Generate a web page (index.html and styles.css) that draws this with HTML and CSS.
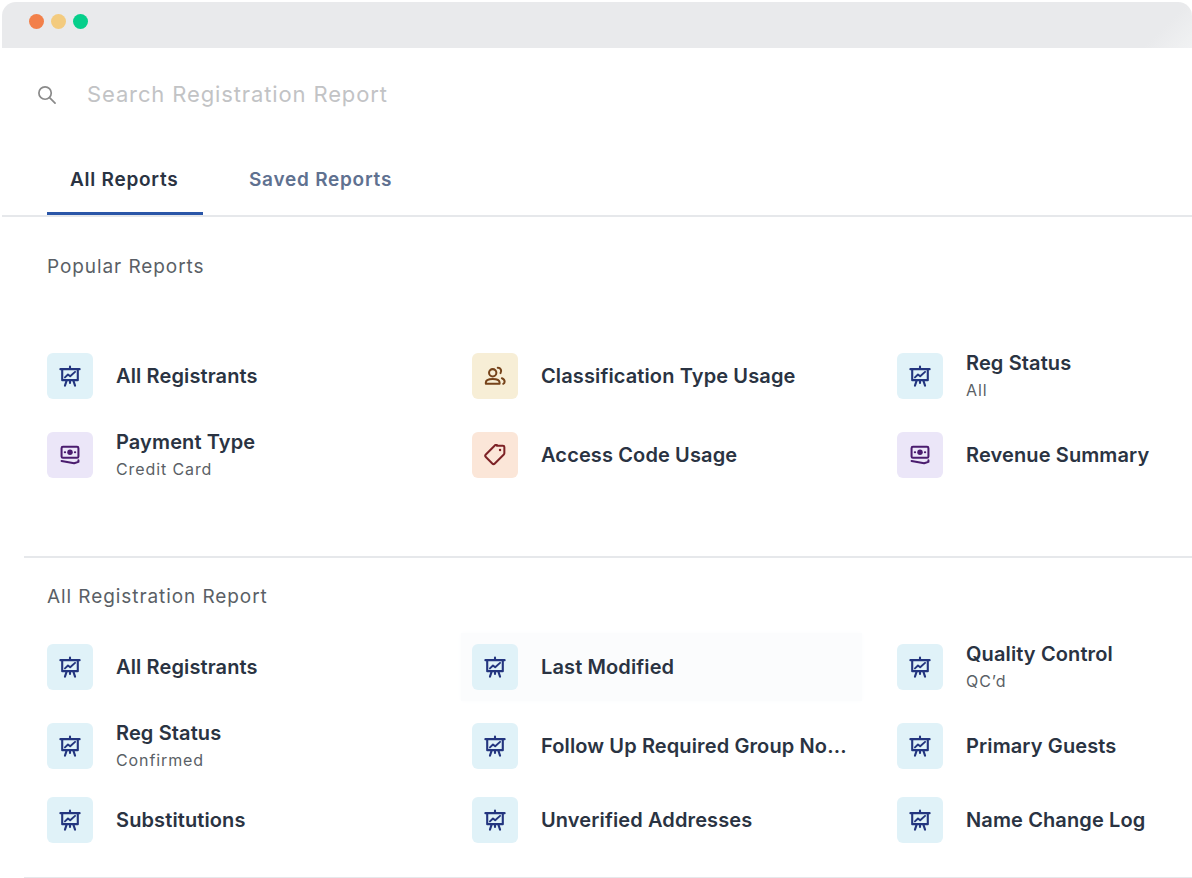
FILE: index.html
```html
<!DOCTYPE html>
<html lang="en">

<head>
    <meta charset="UTF-8">
    <meta name="viewport" content="width=device-width, initial-scale=1.0">
    <title>Registration Reports</title>
    <link rel="stylesheet" href="styles.css">
</head>

<body>

    <svg class="sprites" width="0" height="0">
        <symbol id="i-chart" viewBox="0 0 24 24">
            <path d="M1.500 4.500h21M3.500 4.500v12h17v-12M12 4.500V1.800M8.500 16.500 6.500 22.500M15.500 16.500 17.500 22.500M12 16.500V19.500" fill="none" stroke="currentColor" stroke-width="2.300" stroke-linecap="round" stroke-linejoin="round"/>
            <path d="M6.500 13.500 9.800 10.300 12.200 12.300 17.500 7.500" fill="none" stroke="currentColor" stroke-width="2.100" stroke-linecap="round" stroke-linejoin="round"/>
        </symbol>
        <symbol id="i-money" viewBox="0 0 24 24">
            <rect x="2.800" y="3" width="18.400" height="12" rx="1.500" fill="none" stroke="currentColor" stroke-width="2.200"/>
            <circle cx="12" cy="9" r="3" fill="currentColor"/>
            <path d="M6.300 9h.4M17.300 9h.4" stroke="currentColor" stroke-width="2.200" stroke-linecap="round"/>
            <path d="M2.800 18.500 16.500 21l4.700-1.500v-1.800" fill="none" stroke="currentColor" stroke-width="2.200" stroke-linecap="round" stroke-linejoin="round"/>
        </symbol>
        <symbol id="i-users" viewBox="0 0 24 24">
            <circle cx="9.500" cy="8.500" r="4" fill="none" stroke="currentColor" stroke-width="2.200"/>
            <path d="M2 20.500v-1.300c0-2.500 2.200-3.900 7.500-3.900s7.500 1.400 7.500 3.900v1.300z" fill="none" stroke="currentColor" stroke-width="2.200" stroke-linejoin="round"/>
            <path d="M15 3a3.600 3.600 0 0 1 3 5.800M19.500 14.500c1.800.6 3 2 3 3.800 0 1-.5 1.700-1.500 2.200" fill="none" stroke="currentColor" stroke-width="2.200" stroke-linecap="round"/>
        </symbol>
        <symbol id="i-tag" viewBox="0 0 24 24">
            <path d="M14 1.800h6.700a1.500 1.500 0 0 1 1.500 1.500V10a2 2 0 0 1-.6 1.400l-9.800 9.800a2 2 0 0 1-2.800 0l-7-7a2 2 0 0 1 0-2.800l9.800-9.800a2 2 0 0 1 2.200-.6z" fill="none" stroke="currentColor" stroke-width="2.200" stroke-linejoin="round"/>
            <circle cx="17.500" cy="6.500" r="1.300" fill="currentColor"/>
        </symbol>
    </svg>

    <div class="window-bar">
        <span class="dot dot-orange"></span>
        <span class="dot dot-yellow"></span>
        <span class="dot dot-green"></span>
    </div>

    <div class="search">
        <svg class="search-icon" viewBox="0 0 20 20">
            <circle cx="8.500" cy="8.500" r="6.500" fill="none" stroke="currentColor" stroke-width="1.800"/>
            <path d="M13.500 13.500 19 19" fill="none" stroke="currentColor" stroke-width="1.800" stroke-linecap="round"/>
        </svg>
        <span class="search-text">Search Registration Report</span>
    </div>

    <div class="tabs">
        <a class="tab active">All Reports</a>
        <a class="tab">Saved Reports</a>
    </div>

    <section class="section popular">
        <h2 class="section-title">Popular Reports</h2>
        <div class="grid">
            <div class="item">
                <span class="icon blue"><svg><use href="#i-chart"/></svg></span>
                <div class="label"><div class="name">All Registrants</div></div>
            </div>
            <div class="item">
                <span class="icon yellow"><svg><use href="#i-users"/></svg></span>
                <div class="label"><div class="name">Classification Type Usage</div></div>
            </div>
            <div class="item">
                <span class="icon blue"><svg><use href="#i-chart"/></svg></span>
                <div class="label"><div class="name">Reg Status</div><div class="sub">All</div></div>
            </div>
            <div class="item">
                <span class="icon purple"><svg><use href="#i-money"/></svg></span>
                <div class="label"><div class="name">Payment Type</div><div class="sub">Credit Card</div></div>
            </div>
            <div class="item">
                <span class="icon orange"><svg><use href="#i-tag"/></svg></span>
                <div class="label"><div class="name">Access Code Usage</div></div>
            </div>
            <div class="item">
                <span class="icon purple"><svg><use href="#i-money"/></svg></span>
                <div class="label"><div class="name">Revenue Summary</div></div>
            </div>
        </div>
    </section>

    <section class="section all">
        <h2 class="section-title">All Registration Report</h2>
        <div class="grid">
            <div class="item">
                <span class="icon blue"><svg><use href="#i-chart"/></svg></span>
                <div class="label"><div class="name">All Registrants</div></div>
            </div>
            <div class="item hovered">
                <span class="icon blue"><svg><use href="#i-chart"/></svg></span>
                <div class="label"><div class="name">Last Modified</div></div>
            </div>
            <div class="item">
                <span class="icon blue"><svg><use href="#i-chart"/></svg></span>
                <div class="label"><div class="name">Quality Control</div><div class="sub">QC’d</div></div>
            </div>
            <div class="item">
                <span class="icon blue"><svg><use href="#i-chart"/></svg></span>
                <div class="label"><div class="name">Reg Status</div><div class="sub">Confirmed</div></div>
            </div>
            <div class="item">
                <span class="icon blue"><svg><use href="#i-chart"/></svg></span>
                <div class="label"><div class="name">Follow Up Required Group No...</div></div>
            </div>
            <div class="item">
                <span class="icon blue"><svg><use href="#i-chart"/></svg></span>
                <div class="label"><div class="name">Primary Guests</div></div>
            </div>
            <div class="item">
                <span class="icon blue"><svg><use href="#i-chart"/></svg></span>
                <div class="label"><div class="name">Substitutions</div></div>
            </div>
            <div class="item">
                <span class="icon blue"><svg><use href="#i-chart"/></svg></span>
                <div class="label"><div class="name">Unverified Addresses</div></div>
            </div>
            <div class="item">
                <span class="icon blue"><svg><use href="#i-chart"/></svg></span>
                <div class="label"><div class="name">Name Change Log</div></div>
            </div>
        </div>
    </section>

</body>

</html>
```

FILE: styles.css
```css
* {
    margin: 0;
    padding: 0;
    box-sizing: border-box;
    font-family: 'Inter', 'Open Sans', sans-serif;
}

html,
body {
    height: 878px;
    overflow: hidden;
}

body {
    background-color: #ffffff;
    padding-top: 2px;
}

.sprites {
    display: block;
    height: 0;
}

.window-bar {
    height: 46px;
    margin-left: 2px;
    padding: 0 0 8px 27px;
    display: flex;
    align-items: center;
    gap: 7px;
    background: linear-gradient(135deg, #e9eaec 96%, #f1f2f3 100%);
    border-top-left-radius: 14px;
    border-top-right-radius: 14px;
}

.dot {
    width: 15px;
    height: 15px;
    border-radius: 50%;
}

.dot-orange {
    background-color: #f2804a;
}

.dot-yellow {
    background-color: #f3cb7f;
}

.dot-green {
    background-color: #06cf8b;
}

.search {
    height: 92px;
    padding-left: 37px;
    display: flex;
    align-items: center;
}

.search-icon {
    width: 19px;
    height: 19px;
    color: #8a8a8a;
}

.search-text {
    margin-left: 31px;
    font-size: 22px;
    letter-spacing: 0.87px;
    color: #c2c3c5;
}

.tabs {
    height: 77px;
    margin-left: 2px;
    padding-left: 45px;
    display: flex;
    border-bottom: 2px solid #e6e8eb;
}

.tab {
    height: 75px;
    padding-top: 28px;
    font-size: 19px;
    font-weight: 600;
    line-height: 24px;
    letter-spacing: 0.75px;
    color: #5f7190;
}

.tab.active {
    width: 156px;
    padding-left: 23px;
    margin-right: 46px;
    color: #2a3342;
    border-bottom: 3px solid #2a56a8;
}

.section {
    padding-left: 47px;
}

.popular {
    height: 339px;
    padding-top: 38px;
}

.all {
    height: 323px;
    margin-left: 24px;
    padding-left: 23px;
    padding-top: 27px;
    border-top: 2px solid #e6e8eb;
    border-bottom: 2px solid #e6e8eb;
}

.section-title {
    font-size: 19px;
    font-weight: 400;
    line-height: 24px;
    letter-spacing: 0.92px;
    color: #5a5f66;
}

.grid {
    display: grid;
    grid-template-columns: 425px 425px 1fr;
    align-items: start;
}

.popular .grid {
    margin-top: 74px;
    grid-template-rows: 79px 46px;
}

.all .grid {
    margin-top: 35px;
    grid-template-rows: 79px 74px 46px;
}

.item {
    height: 46px;
    display: flex;
    align-items: center;
    gap: 23px;
}

.item.hovered {
    width: 401px;
    height: 68px;
    margin: -11px 0 0 -11px;
    padding: 11px;
    background-color: #fbfcfd;
    box-shadow: 0 0 6px #fbfcfd;
}

.icon {
    flex: none;
    width: 46px;
    height: 46px;
    border-radius: 6px;
    display: flex;
    align-items: center;
    justify-content: center;
}

.icon svg {
    width: 22px;
    height: 22px;
}

.blue {
    background-color: #e0f2f8;
    color: #23357f;
}

.yellow {
    background-color: #f7eed6;
    color: #76431a;
}

.purple {
    background-color: #ebe6f8;
    color: #4a1c6e;
}

.orange {
    background-color: #fbe6d8;
    color: #7d2226;
}

.name {
    font-size: 20px;
    font-weight: 600;
    line-height: 25px;
    letter-spacing: 0.12px;
    color: #2a3342;
    white-space: nowrap;
}

.sub {
    margin-top: 3px;
    font-size: 16px;
    line-height: 22px;
    letter-spacing: 0.9px;
    color: #5a5f66;
}
```
